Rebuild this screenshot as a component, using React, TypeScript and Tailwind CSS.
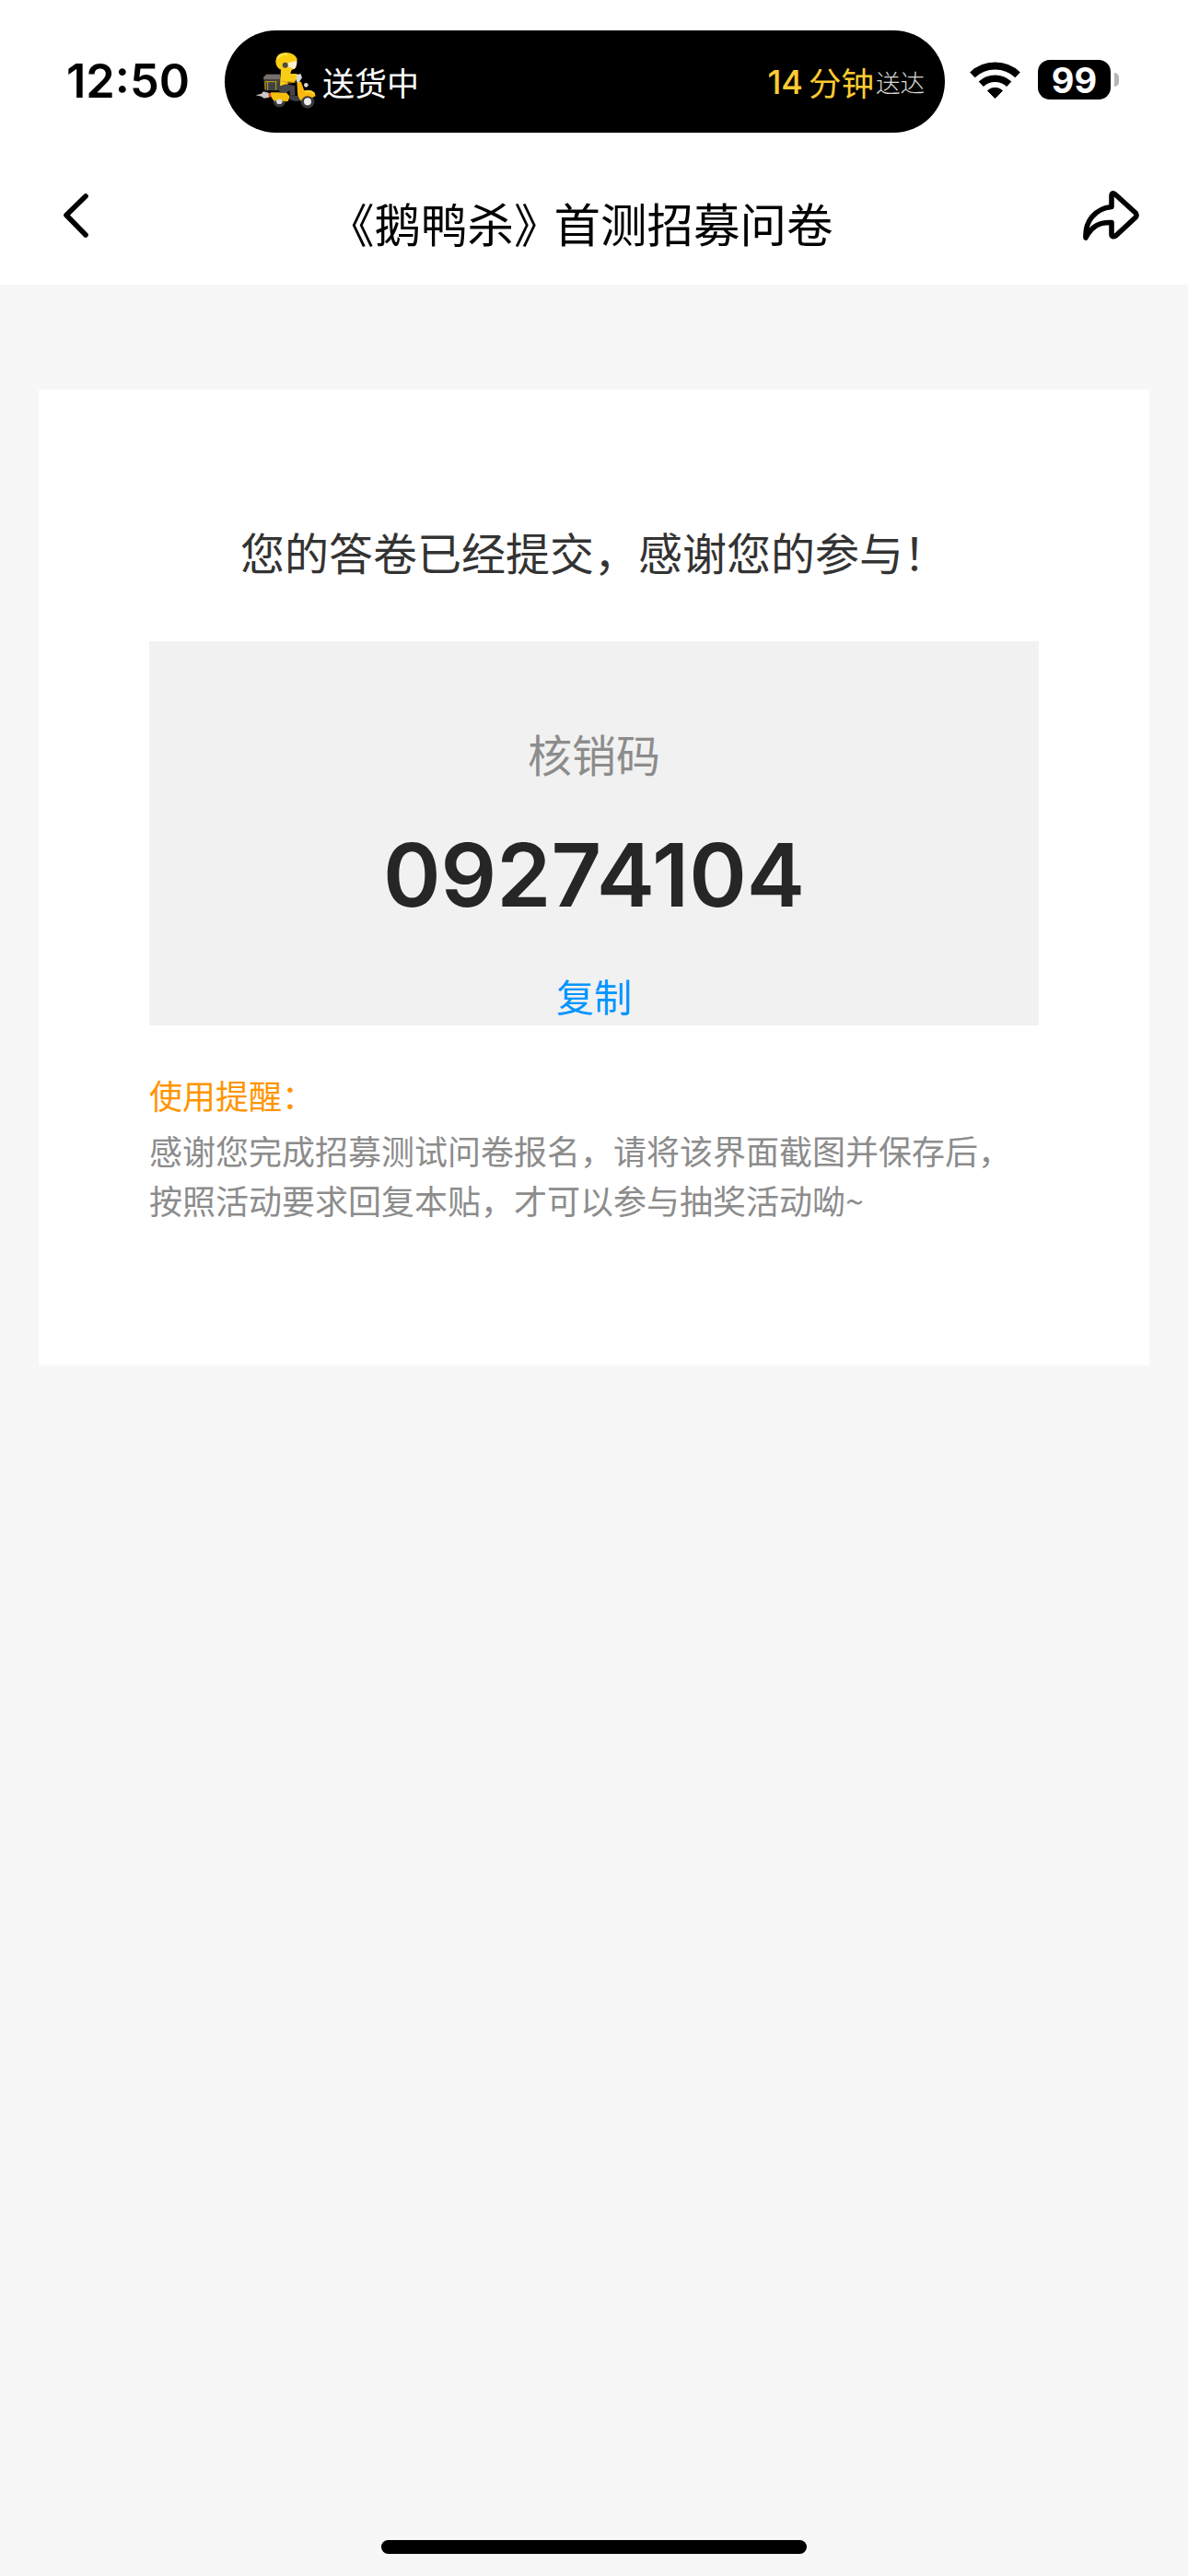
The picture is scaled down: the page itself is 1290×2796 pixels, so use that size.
import type { ReactNode } from 'react';

const verifyCode = '09274104';

const tips = [
  '感谢您完成招募测试问卷报名，请将该界面截图并保存后，',
  '按照活动要求回复本贴，才可以参与抽奖活动呦~',
];

export default function App() {
  return (
    <div className="flex h-[2796px] w-[1290px] flex-col overflow-hidden bg-[#f7f7f7] font-['Noto_Sans_CJK_SC',sans-serif]">
      <div className="bg-white">
        <StatusBar />
        <NavBar />
      </div>

      <main className="mx-[42px] mt-[114px] h-[1059px] bg-white px-[120px] pt-[139px]">
        <h2 className="text-center text-[48px] leading-[72px] text-[#333333]">
          您的答卷已经提交，感谢您的参与！
        </h2>
        <CodePanel code={verifyCode} />
        <div className="mt-[48px] text-[36px] leading-[54px]">
          <p className="text-[#ff9500]">使用提醒：</p>
          <div className="mt-[6px] text-[#8c8c8c]">
            {tips.map((line) => (
              <p key={line} className="whitespace-nowrap">
                {line}
              </p>
            ))}
          </div>
        </div>
      </main>

      <div className="mx-auto mt-auto mb-[24px] h-[15px] w-[462px] rounded-full bg-black" />
    </div>
  );
}

function StatusBar() {
  return (
    <div className="flex h-[177px] items-center">
      <div className="w-[244px] pl-[72px] font-['Inter',sans-serif] text-[50.5px] leading-none font-semibold text-black">
        12:50
      </div>
      <div className="flex h-[111px] w-[782px] items-center rounded-full bg-black pr-[22px] pl-[32px]">
        <CourierIcon />
        <span className="ml-[4px] text-[35px] leading-[54px] text-white">
          送货中
        </span>
        <span className="mr-[6px] ml-auto font-['Inter',sans-serif] text-[36px] leading-[54px] font-medium text-[#ffcb33]">
          14
        </span>
        <span className="text-[35.5px] leading-[54px] text-[#ffcb33]">
          分钟
        </span>
        <span className="ml-[2px] text-[26.5px] leading-[54px] font-light text-[#d8d8d8]">
          送达
        </span>
      </div>
      <WifiIcon />
      <div className="mb-[4px] ml-[18px] flex items-center">
        <div className="flex h-[43px] w-[79px] items-center justify-center rounded-[13px] bg-black font-['Inter',sans-serif] text-[38px] leading-none font-bold text-white">
          99
        </div>
        <div className="ml-[4px] h-[15px] w-[5px] rounded-r-full bg-[#b5b5b5]" />
      </div>
    </div>
  );
}

function NavBar() {
  return (
    <div className="flex h-[132px] items-start">
      <NavIcon className="mt-[27px] ml-[60px]">
        <path d="M33 9 12 29.5 33 51" />
      </NavIcon>
      <h1 className="mt-[28px] ml-[228px] flex text-[50.5px] leading-[72px] whitespace-nowrap text-black">
        <span>《</span>
        <span>鹅鸭杀</span>
        <span className="tracking-[-7px]">》</span>
        <span>首测招募问卷</span>
      </h1>
      <NavIcon className="mt-[27px] mr-[48px] ml-auto">
        <path d="M5 54C4 36 15 22.5 33 20.5V9Q33 4 37 7L59 27Q61 29.5 59 32L38 51.500Q33 54.500 33 50V37.5C19 37 11 42 5 54Z" />
      </NavIcon>
    </div>
  );
}

function NavIcon({
  className,
  children,
}: {
  className: string;
  children: ReactNode;
}) {
  return (
    <svg
      className={`h-[64px] w-[68px] shrink-0 ${className}`}
      viewBox="0 0 68 64"
      fill="none"
      stroke="#000"
      strokeWidth="5.6"
      strokeLinecap="round"
      strokeLinejoin="round"
    >
      {children}
    </svg>
  );
}

function CodePanel({ code }: { code: string }) {
  return (
    <div className="mt-[62px] h-[417px] bg-[#f1f1f1] pt-[87px] text-center">
      <div className="text-[48px] leading-[68px] text-[#8c8c8c]">核销码</div>
      <div className="mt-[49px] font-['Inter',sans-serif] text-[95px] leading-[100px] font-semibold text-[#262626]">
        {code}
      </div>
      <button className="mx-auto mt-[49px] block text-[41px] leading-[62px] text-[#0095ff]">
        复制
      </button>
    </div>
  );
}

function WifiIcon() {
  return (
    <svg
      className="mb-[4px] ml-[27px] h-[42px] w-[56px]"
      viewBox="0 0 56 42"
      fill="none"
      stroke="#000"
    >
      <path d="M2.9 15.3A36 36 0 0 1 52.1 15.3" strokeWidth="8" />
      <path d="M12.3 25.2A22.3 22.3 0 0 1 42.7 25.2" strokeWidth="7.6" />
      <path
        d="M27.5 40.5 19.5 32.5A11.8 11.8 0 0 1 35.5 32.5Z"
        fill="#000"
        strokeWidth="1"
        strokeLinejoin="round"
      />
    </svg>
  );
}

// rider on a yellow delivery scooter
function CourierIcon() {
  return (
    <svg
      className="mb-[2px] h-[66px] w-[70px] shrink-0"
      viewBox="48 46 210 198"
      fill="none"
    >
      {/* exhaust */}
      <path d="M53 191 72 186 78 179 97 184V198L80 201 72 195Z" fill="#c9c9c9" />
      <path d="M95 184h10v13H95z" fill="#e2452a" />
      {/* wheels */}
      <circle cx="130" cy="210" r="20" fill="#3a3a3a" />
      <circle cx="130" cy="210" r="10" fill="#dcdcdc" />
      <circle cx="222" cy="212" r="22" fill="#3a3a3a" />
      <circle cx="222" cy="212" r="12" fill="#ececec" />
      {/* body */}
      <path d="M102 182H152L164 195 158 211H144Q128 196 115 211Q102 204 102 182Z" fill="#f8bd0b" />
      <path d="M162 193H194L201 208 184 211 164 206Z" fill="#3c3d40" />
      {/* top box */}
      <path d="M79 132 88 123H132L136 140V176H83L79 140Z" fill="#3f4143" />
      <path d="M79 132 88 123H131L134 139H79Z" fill="#77706a" />
      <path d="M84 147V173M92 148V174M119 148V174M84 147H122" stroke="#c9a70f" strokeWidth="3" />
      {/* rider */}
      <path d="M135 108H170L166 121 187 121 193 130 179 148 157 147 158 156 132 161Z" fill="#f9cc16" />
      <path d="M140 145 162 151 183 148" stroke="#d99508" strokeWidth="3" />
      <path d="M131 162 151 155 181 160V192H164V176L151 183H130Z" fill="#454548" />
      <path d="M187 145 201 148 211 176Q231 171 245 183L248 194 237 199Q215 185 200 210L190 192Z" fill="#f8b80d" />
      <path d="M213 180Q232 174 244 187" stroke="#ffd42a" strokeWidth="6" />
      <path d="M186 125 199 121 204 134 193 151 185 145Z" fill="#d7d7d9" />
      <circle cx="217" cy="158" r="7" fill="#d6d6d6" />
      {/* helmet */}
      <path d="M118 80Q119 53 151 52 180 53 188 73L183 101Q169 116 142 111 118 105 118 80Z" fill="#fbce12" />
      <path d="M126 69Q136 55 153 58" stroke="#ffe34c" strokeWidth="7" strokeLinecap="round" />
      <path d="M158 86 187 79Q189 94 179 106L160 99Z" fill="#fff1d0" />
      <circle cx="149" cy="93" r="9" fill="#4a4c44" />
    </svg>
  );
}
